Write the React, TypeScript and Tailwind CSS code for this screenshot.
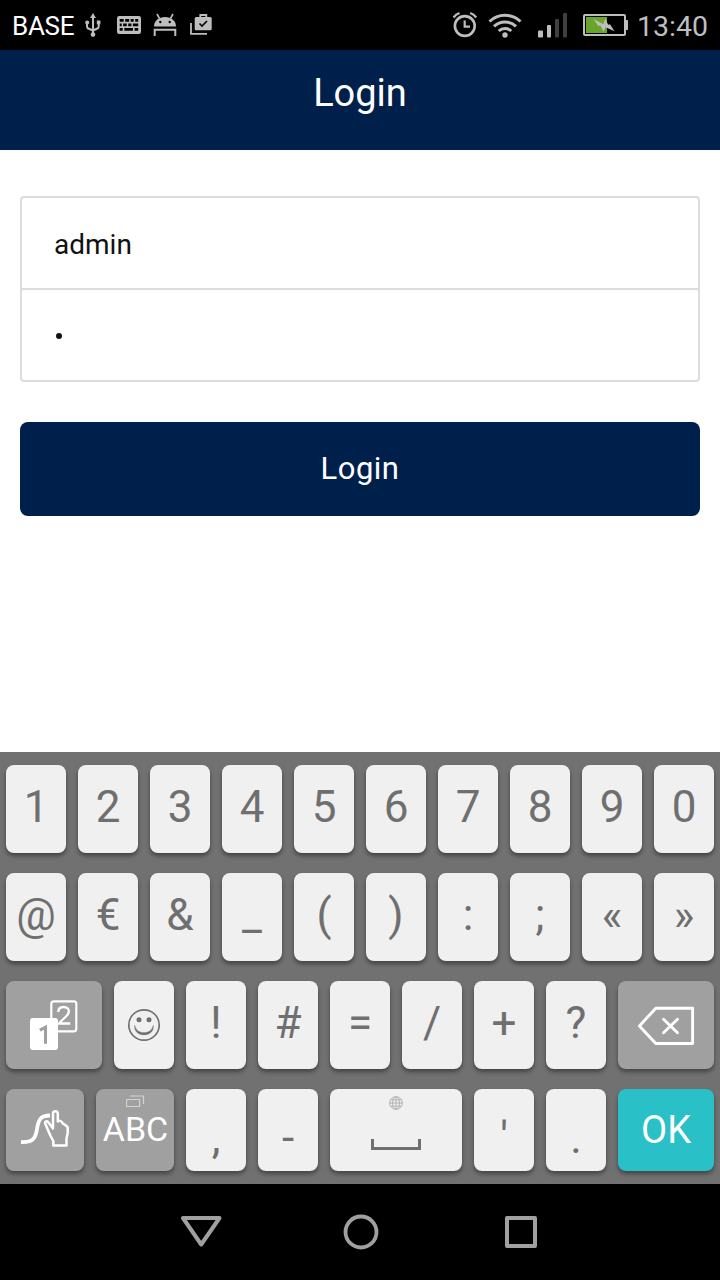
import type { ReactNode } from "react";

type KeyTone = "light" | "dark" | "accent";

const tones: Record<KeyTone, string> = {
  light: "bg-[#f0f0f0] text-[#6f6f6f]",
  dark: "bg-[#a0a0a0] text-white",
  accent: "bg-[#29c0c8] text-white",
};

function Key({
  children,
  tone = "light",
  size = "w-[60px] text-[44px] leading-[84px]",
}: {
  children: ReactNode;
  tone?: KeyTone;
  size?: string;
}) {
  return (
    <button
      className={`flex h-full shrink-0 items-start justify-center overflow-visible rounded-[8px] shadow-[0_3px_4px_rgba(0,0,0,0.4)] ${tones[tone]} ${size}`}
    >
      {children}
    </button>
  );
}

const lowKey = "w-[60px] text-[44px] leading-[98px]";

function StatusBar() {
  return (
    <header className="flex h-[50px] items-start bg-black text-[#bebebe]">
      <span className="ml-[12px] w-[72px] text-[26px] leading-[52px] tracking-[-0.3px] text-white">BASE</span>
      <svg className="h-[50px] w-[20px]" viewBox="84 0 20 50" fill="none" stroke="currentColor" strokeWidth="2">
        <path d="M93 17v18M87 22v4.500c0 1.300 1 2 2 2.300l4 1.700M98.700 22v4.500c0 1.300-1 2-2 2.300l-3.700 1.700" />
        <path d="M93 13l3 5h-6z" fill="currentColor" stroke="none" />
        <circle cx="87.200" cy="22.500" r="2" fill="currentColor" stroke="none" />
        <path d="M96.800 20.500h3.600v3.800h-3.600z" fill="currentColor" stroke="none" />
        <circle cx="93" cy="34.600" r="2.300" fill="currentColor" stroke="none" />
      </svg>
      <svg className="ml-[12px] h-[50px] w-[26px]" viewBox="116 0 26 50">
        <rect x="117" y="16" width="24" height="18" rx="2.200" fill="currentColor" />
        <path
          d="M119.700 19h4v2.800h-4zM125.200 19h4v2.800h-4zM130.700 19h3v2.800h-3zM135.200 19h3v2.800h-3zM119.700 23.500h2v2.800h-2zM123.200 23.500h3.500v2.800h-3.500zM128.200 23.500h3.200v2.800h-3.200zM132.900 23.500h5.300v2.800h-5.300zM119.700 28h3v2.800h-3zM124.300 28h8.700v2.800h-8.700zM134.600 28h3.600v2.800h-3.600z"
          fill="#000"
        />
      </svg>
      <svg className="ml-[11px] h-[50px] w-[24px]" viewBox="153 0 24 50">
        <path d="M154 26.500c0-5.800 5-9.500 11-9.500s11 3.700 11 9.500z" fill="currentColor" />
        <path d="M157 14l2.500 4.500M173 14l-2.500 4.500" stroke="currentColor" strokeWidth="1.600" />
        <circle cx="160.300" cy="22" r="1.200" />
        <circle cx="169.700" cy="22" r="1.200" />
        <path d="M154.700 36v-6.200h20.600v6.200" fill="none" stroke="currentColor" strokeWidth="2" />
      </svg>
      <svg className="ml-[13px] h-[50px] w-[24px]" viewBox="190 0 24 50">
        <path d="M191 23v10.800h16" fill="none" stroke="currentColor" strokeWidth="1.800" />
        <rect x="194.700" y="17" width="17" height="13.300" rx="1.500" fill="currentColor" />
        <path d="M200.300 17.500v-2.500h6v2.500" fill="none" stroke="currentColor" strokeWidth="1.800" />
        <path d="M199.500 23.500l2.500 2.500 5-5" fill="none" stroke="#000" strokeWidth="1.600" />
      </svg>
      <svg className="ml-auto h-[50px] w-[26px]" viewBox="452 0 26 50" fill="none" stroke="currentColor">
        <circle cx="464.800" cy="26" r="9.900" strokeWidth="2.600" />
        <path d="M464.700 20.500v6.200h5.300" strokeWidth="2.200" />
        <path d="M453.500 17.500c1.500-2 3.500-3.700 6-4.500M476.200 17.500c-1.500-2-3.500-3.700-6-4.500" strokeWidth="2.200" />
      </svg>
      <svg className="ml-[9px] h-[50px] w-[36px]" viewBox="487 0 36 50" fill="none" stroke="currentColor" strokeWidth="3">
        <path d="M489.500 21.500a22.500 22.500 0 0 1 31 0M494 26.300a16 16 0 0 1 22 0M498.700 31a9.500 9.500 0 0 1 12.600 0" />
        <circle cx="505" cy="35" r="2.700" fill="currentColor" stroke="none" />
      </svg>
      <svg className="ml-[14px] h-[50px] w-[32px]" viewBox="537 0 32 50" fill="currentColor">
        <rect x="538" y="30.500" width="5" height="7" rx="1" />
        <rect x="547" y="25" width="4" height="12.500" rx="1" />
        <rect x="555" y="19" width="4" height="18.500" rx="1" fill="#404040" />
        <rect x="563" y="13" width="4" height="24.500" rx="1" fill="#404040" />
      </svg>
      <svg className="ml-[13px] h-[50px] w-[48px]" viewBox="582 0 48 50">
        <rect x="584" y="15" width="41" height="20" rx="1" fill="none" stroke="currentColor" strokeWidth="2" />
        <path d="M626 20h1.200q.8 0 .8.800v8.400q0 .8-.8.800h-1.200z" fill="currentColor" />
        <rect x="586" y="17" width="21" height="16" fill="#68a528" />
        <path d="M593.500 19l9.800 5.200 2-5.700 2.800 6.200 1.900-.4 4.500 7-9-4-2 4.500-3.200-6.200-2 .4z" fill="currentColor" />
      </svg>
      <span className="mr-[11px] ml-[7px] w-[72px] text-[28.5px] leading-[54px] whitespace-nowrap">13:40</span>
    </header>
  );
}

function NumberPagesIcon() {
  return (
    <svg className="mt-[18px] h-[54px] w-[50px]" viewBox="29 999 50 54" fill="none">
      <rect x="51.300" y="1001.300" width="25" height="30" rx="2.500" stroke="white" strokeWidth="2.200" />
      <path d="M58.300 1012c0-3.300 2.300-5 5.300-5s5.300 1.800 5.300 4.600c0 4.100-6.500 7.200-9.800 11.900h11.200" stroke="white" strokeWidth="2.300" />
      <rect x="30" y="1018" width="28" height="32" rx="3" fill="white" />
      <path d="M39.800 1030.200l5.700-2.900v16.500" stroke="#a0a0a0" strokeWidth="3" />
    </svg>
  );
}

function SmileIcon() {
  return (
    <svg className="mt-[27px] h-[34px] w-[34px]" viewBox="127 1008 34 34" fill="none" stroke="currentColor">
      <circle cx="144" cy="1025" r="15.200" strokeWidth="1.700" />
      <circle cx="139" cy="1019.800" r="2.500" fill="currentColor" stroke="none" />
      <circle cx="149" cy="1019.800" r="2.500" fill="currentColor" stroke="none" />
      <path d="M134.700 1025c.8 5 4.500 7.500 9.300 7.500s8.500-2.500 9.300-7.500c1 6-3.300 9.900-9.300 9.900s-10.300-3.900-9.300-9.900z" fill="currentColor" strokeWidth=".3" />
    </svg>
  );
}

function BackspaceIcon() {
  return (
    <svg className="mt-[24px] h-[42px] w-[58px]" viewBox="637 1005 58 42" fill="none" stroke="white" strokeWidth="2.900" strokeLinejoin="round">
      <path d="M655.800 1008.300h36.800v35.200h-36.800l-16.400-17.600z" />
      <path d="M663.500 1019.300l14 13.500M677.500 1019.300l-14 13.500" strokeLinecap="round" />
    </svg>
  );
}

function SwipeIcon() {
  return (
    <svg className="mt-[20px] h-[40px] w-[52px]" viewBox="19 1109 52 40" fill="none" stroke="white">
      <path d="M21 1142c10.500.5 14.500-2 16-13 1.500-10 4-13.500 13-13.500" strokeWidth="3.800" />
      <path d="M53.300 1145.500v-4.500l-3-5.500-5.300-12.500c-.3-1.700 1.800-2.300 3.300-.8l4.700 6.300v-15c0-3 4.800-3 4.800 0v8c2-1.300 4.200-.5 4.900 1.800 2.500 1.200 4 2.500 5 4 .5 4-.2 8-1.200 11.200v7z" strokeWidth="2.500" strokeLinejoin="round" />
    </svg>
  );
}

export default function App() {
  return (
    <main className="flex h-[1280px] w-[720px] flex-col overflow-hidden bg-white font-['Roboto',sans-serif]">
      <StatusBar />
      <div className="h-[100px] bg-[#00204c] text-center text-[38px] leading-[86px] text-white">
        <h1>Login</h1>
      </div>

      <form className="flex flex-1 flex-col px-5 pt-[46px]">
        <div className="flex h-[186px] flex-col divide-y-2 divide-[#dddddd] rounded-[4px] border-2 border-[#dddddd] text-[28px] text-[#111111]">
          <div className="h-[92px] px-8 leading-[94px]">admin</div>
          <div className="flex flex-1 items-center px-[34px] pt-[2px]">
            <span className="size-[6px] rounded-full bg-[#111111]" />
          </div>
        </div>
        <button type="button" className="mt-10 h-[94px] rounded-[8px] bg-[#00204c] text-[31px] leading-[94px] tracking-[0.5px] text-white">
          Login
        </button>
      </form>

      <section className="flex h-[432px] flex-col gap-5 bg-[#717171] px-[6px] pt-[13px]">
        <div className="flex h-[88px] gap-3">
          {["1", "2", "3", "4", "5", "6", "7", "8", "9", "0"].map((label) => (
            <Key key={label}>{label}</Key>
          ))}
        </div>
        <div className="flex h-[88px] gap-3">
          {["@", "€", "&", "_", "(", ")", ":", ";", "«", "»"].map((label) => (
            <Key key={label}>{label}</Key>
          ))}
        </div>
        <div className="flex h-[88px] gap-3">
          <Key tone="dark" size="w-24">
            <NumberPagesIcon />
          </Key>
          <Key size="w-[60px]">
            <SmileIcon />
          </Key>
          {["!", "#", "=", "/", "+", "?"].map((label) => (
            <Key key={label}>{label}</Key>
          ))}
          <Key tone="dark" size="w-24">
            <BackspaceIcon />
          </Key>
        </div>
        <div className="flex h-[82px] gap-3">
          <Key tone="dark" size="w-[78px]">
            <SwipeIcon />
          </Key>
          <Key tone="dark" size="relative w-[78px] pl-[1px] text-[34px] leading-[81px]">
            <svg className="absolute top-[6px] left-[30px] h-[12px] w-[19px]" viewBox="126 1095 19 12" fill="none" stroke="#d2d2d2" strokeWidth="1.200">
              <path d="M126.600 1099.500h13v7h-13zM130 1096h13.500v8" />
            </svg>
            ABC
          </Key>
          <Key size={lowKey}>,</Key>
          <Key size={lowKey}>-</Key>
          <Key size="w-[132px]">
            <svg className="h-[82px] w-[132px]" viewBox="330 1089 132 82" fill="none">
              <path d="M372.500 1139v9.500h47V1139" stroke="currentColor" strokeWidth="3" />
              <g stroke="#b2b2b2" strokeWidth="1">
                <circle cx="396" cy="1103" r="6.300" />
                <ellipse cx="396" cy="1103" rx="3.500" ry="6.300" />
                <path d="M396 1096.700v12.600M389.700 1103h12.600M390.700 1099.800h10.600M390.700 1106.200h10.600" />
              </g>
            </svg>
          </Key>
          <Key size={lowKey}>'</Key>
          <Key size={lowKey}>.</Key>
          <Key tone="accent" size="w-24 text-[38px] leading-[82px]">OK</Key>
        </div>
      </section>

      <nav className="flex h-24 bg-black pl-[121px]">
        <svg className="h-24 w-40 shrink-0" viewBox="121 1184 160 96" fill="none" stroke="#a0a0a0" strokeWidth="4" strokeLinejoin="round">
          <path d="M183 1218h36.500l-18.300 26.500z" />
        </svg>
        <svg className="h-24 w-40 shrink-0" viewBox="281 1184 160 96" fill="none" stroke="#a0a0a0" strokeWidth="3.800">
          <circle cx="361" cy="1232" r="15.500" />
        </svg>
        <svg className="h-24 w-40 shrink-0" viewBox="441 1184 160 96" fill="none" stroke="#a0a0a0" strokeWidth="4" strokeLinejoin="round">
          <rect x="507" y="1218" width="28" height="28" />
        </svg>
      </nav>
    </main>
  );
}
